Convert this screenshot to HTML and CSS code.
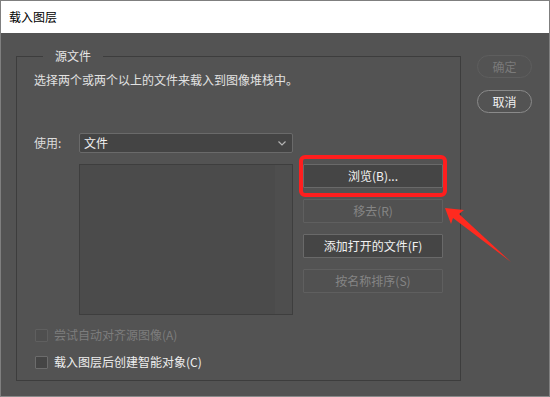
FILE: index.html
```html
<!DOCTYPE html>
<html lang="zh">
<head>
<meta charset="utf-8">
<title>载入图层</title>
<link rel="stylesheet" href="styles.css">
</head>
<body>
<div class="window">
  <div class="titlebar">载入图层</div>
  <div class="dialog">
    <fieldset class="group">
      <legend class="legend">源文件</legend>
      <div class="desc">选择两个或两个以上的文件来载入到图像堆栈中。</div>
      <div class="use-row">
        <span class="use-label">使用:</span>
        <div class="select">
          <span>文件</span>
          <svg class="chev" width="8" height="5" viewBox="0 0 8 5"><path d="M0.5 0.5 L4 4 L7.5 0.5" fill="none" stroke="#b4b4b4" stroke-width="1.2"/></svg>
        </div>
      </div>
      <div class="main-row">
        <div class="listbox"><div class="list-track"></div></div>
        <div class="btn-col">
          <div class="btn">浏览(B)...</div>
          <div class="btn disabled">移去(R)</div>
          <div class="btn">添加打开的文件(F)</div>
          <div class="btn disabled">按名称排序(S)</div>
        </div>
      </div>
      <div class="check-row disabled">
        <span class="box"></span><span>尝试自动对齐源图像(A)</span>
      </div>
      <div class="check-row">
        <span class="box"></span><span>载入图层后创建智能对象(C)</span>
      </div>
    </fieldset>
    <div class="side">
      <div class="pill disabled">确定</div>
      <div class="pill">取消</div>
    </div>
  </div>
  <div class="highlight"></div>
  <svg class="arrow" width="550" height="397" viewBox="0 0 550 397">
    <polygon points="445,208 464,210 459,214 511,262 453,218 451,224" fill="#ff2a1f"/>
  </svg>
</div>
</body>
</html>
```

FILE: styles.css
```css
* { box-sizing: border-box; }
html, body { margin: 0; padding: 0; }
body {
  width: 550px;
  height: 397px;
  overflow: hidden;
  font-family: "Noto Sans CJK SC", "Noto Sans", sans-serif;
  font-size: 12px;
  line-height: 16px;
}
.window {
  position: relative;
  width: 550px;
  height: 397px;
  border: 1px solid #7f7f7f;
  border-bottom-color: #8a8a8a;
  background: #535353;
  display: flex;
  flex-direction: column;
}
.titlebar {
  height: 32px;
  background: #ffffff;
  color: #000;
  padding-left: 8px;
  display: flex;
  align-items: center;
  font-size: 12px;
}
.dialog {
  flex: 1;
  display: flex;
  align-items: flex-start;
  padding: 15px 0 0 15px;
  background: #535353;
}
.group {
  margin: 0;
  width: 445px;
  height: 333px;
  border: 1px solid #3d3d3d;
  padding: 0 17px 0 17px;
  color: #e2e2e2;
}
.legend {
  margin-left: 9px;
  padding: 0 12px;
  line-height: 16px;
  color: #e6e6e6;
}
.desc {
  margin-top: 8px;
  color: #e2e2e2;
}
.use-row {
  margin-top: 45px;
  display: flex;
  align-items: center;
  height: 20px;
}
.use-label {
  width: 45px;
  color: #dcdcdc;
}
.select {
  width: 214px;
  height: 20px;
  background: #444444;
  border: 1px solid #6a6a6a;
  border-radius: 2px;
  display: flex;
  align-items: center;
  justify-content: space-between;
  padding: 0 6px 0 4px;
  color: #f0f0f0;
}
.chev { display: block; }
.main-row {
  margin-top: 11px;
  display: flex;
  padding-left: 45px;
}
.listbox {
  width: 214px;
  height: 151px;
  background: #4b4b4b;
  border: 1px solid #3e3e3e;
  display: flex;
  justify-content: flex-end;
}
.list-track {
  width: 17px;
  background: #4e4e4e;
}
.btn-col {
  margin-left: 10px;
  display: flex;
  flex-direction: column;
  gap: 11px;
}
.btn {
  width: 140px;
  height: 24px;
  background: #454545;
  border: 1px solid #696969;
  border-radius: 1px;
  color: #f2f2f2;
  display: flex;
  align-items: center;
  justify-content: center;
}
.btn.disabled {
  background: #515151;
  border-color: #5f5f5f;
  color: #858585;
}
.check-row {
  margin-top: 11px;
  display: flex;
  align-items: center;
  gap: 6px;
  padding-left: 1px;
  color: #eeeeee;
}
.check-row + .check-row { margin-top: 11px; }
.check-row.disabled { color: #7d7d7d; margin-top: 12px; }
.box {
  width: 13px;
  height: 13px;
  border: 1px solid #6c6c6c;
  background: #454545;
  border-radius: 1px;
}
.check-row.disabled .box {
  border-color: #5f5f5f;
  background: #4f4f4f;
}
.side {
  margin-left: 16px;
  margin-top: 7px;
  display: flex;
  flex-direction: column;
  gap: 12px;
}
.pill {
  width: 55px;
  height: 23px;
  border: 1px solid #8a8a8a;
  border-radius: 12px;
  color: #f2f2f2;
  display: flex;
  align-items: center;
  justify-content: center;
  font-size: 12px;
}
.pill.disabled {
  border-color: #5e5e5e;
  color: #7a7a7a;
}
.highlight {
  position: absolute;
  left: 298px;
  top: 154px;
  width: 148px;
  height: 42px;
  border: 4px solid #ff1e1e;
  border-radius: 6px;
  pointer-events: none;
}
.arrow {
  position: absolute;
  left: -1px;
  top: -1px;
  pointer-events: none;
}
```
